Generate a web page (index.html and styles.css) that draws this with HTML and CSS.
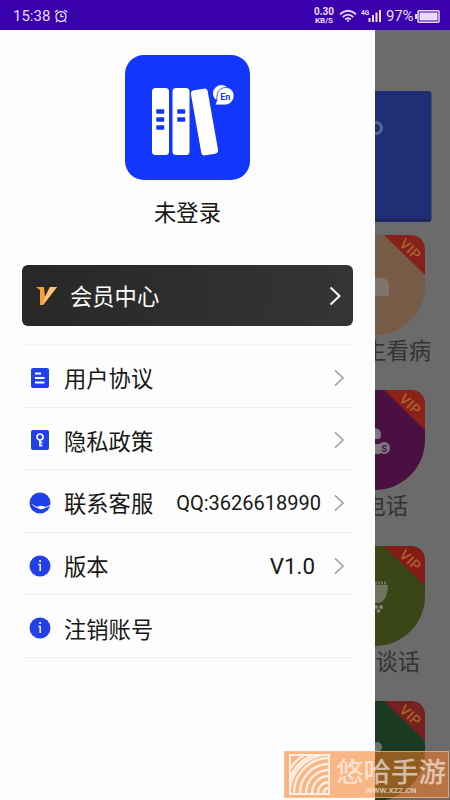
FILE: index.html
```html
<!DOCTYPE html>
<html lang="zh-CN">
<head>
<meta charset="utf-8">
<title>未登录</title>
<link rel="stylesheet" href="styles.css">
</head>
<body>
<header class="status">
  <span class="time">15:38</span>
  <svg class="alarm" width="14" height="14" viewBox="0 0 14 14" fill="none" stroke="currentColor" stroke-width="1.3"><circle cx="7" cy="7.5" r="5"/><path d="M7 4.5v3.2h2.5M1 3.2 3.6 1M13 3.2 10.4 1M3.2 11.5 2 13M10.8 11.5 12 13"/></svg>
  <span class="speed"><b>0.30</b><b>KB/S</b></span>
  <svg class="wifi" width="18" height="14" viewBox="0 0 18 14" fill="none" stroke="currentColor" stroke-width="1.8"><path d="M1 5.2Q9-1.6 17 5.2M3.7 8Q9 3.3 14.3 8M6.2 10.5Q9 8 11.8 10.5"/><circle cx="9" cy="12" r="1" fill="currentColor" stroke="none"/></svg>
  <svg class="signal" width="21" height="14" viewBox="0 0 21 14" fill="currentColor"><text x="0" y="6" class="net">4G</text><path d="M7.500 9h2v4h-2zM11 6h2v7h-2zM14.500 3.500h2V13h-2zM18 1h2v12h-2z"/></svg>
  <span class="percent">97%</span>
  <svg class="battery" width="25" height="13" viewBox="0 0 25 13"><rect x="3" y=".8" width="21" height="11.4" rx="1" fill="none" stroke="currentColor" stroke-width="1.5"/><path d="M4.500 2.500h18v8h-18zM0 4h2v5H0z" fill="currentColor"/></svg>
</header>
<main class="screen">
  <aside class="drawer">
    <svg class="logo" width="125" height="125" viewBox="0 0 125 125">
      <rect width="125" height="125" rx="19" fill="#1236fb"/>
      <g fill="#fff"><rect x="27" y="33" width="17" height="67" rx="3.5"/><rect x="47.500" y="33" width="17" height="67" rx="3.500"/><rect x="71" y="34" width="17" height="66" rx="3.500" transform="rotate(-10 79.500 67)"/><path d="M90 44A8.500 8.500 0 1 1 103 33L98 46Z"/></g>
      <path d="M90 50l2-5C91 37 95 32.500 101 32.500c5 0 8 4 8 8.500s-4 9-9 9Z" fill="#fff" stroke="#1236fb" stroke-width=".8"/>
      <path d="M32 55h6.500v3H32zM32 63h6.500v3H32zM32 71h6.500v3H32zM53 55h6.500v3H53zM53 63h6.500v3H53z" fill="#1236fb" stroke="#1236fb" stroke-width="1.500" stroke-linejoin="round"/>
      <text x="100.300" y="44.800" class="en">En</text>
    </svg>
    <div class="name">未登录</div>
    <div class="member">
      <svg width="21" height="20" viewBox="0 0 21 20"><path d="M0 1H8L9 11 14 1H21L7 19H4L4 4Z" fill="#f5a03c"/><path d="M14 1H21L7 19 9 11Z" fill="#ffc27a"/></svg>
      <span>会员中心</span>
      <svg class="arrow" width="12" height="20" viewBox="0 0 12 20"><path d="m1.500 1.500 9 8.500-9 8.500"/></svg>
    </div>
    <ul class="menu">
      <li><svg class="icon" width="22" height="22" viewBox="0 0 22 22"><rect x="2" y="1" width="18" height="20" rx="2" fill="#2140e8"/><path d="M6 6.500h6M6 11h9.500M6 15.500h9.500" stroke="#fff" stroke-width="1.800"/></svg><span>用户协议</span><svg class="arrow" width="12" height="18" viewBox="0 0 12 20"><path d="m1.500 1.500 9 8.500-9 8.500"/></svg></li>
      <li><svg class="icon" width="22" height="22" viewBox="0 0 22 22"><rect x="2" y="1" width="18" height="20" rx="2" fill="#2140e8"/><g fill="none" stroke="#fff" stroke-width="1.700"><circle cx="11" cy="8" r="3"/><path d="M11 11v6.500M11 13.500h2.500M11 16.500h2.500"/></g></svg><span>隐私政策</span><svg class="arrow" width="12" height="18" viewBox="0 0 12 20"><path d="m1.500 1.500 9 8.500-9 8.500"/></svg></li>
      <li><svg class="icon" width="22" height="22" viewBox="0 0 22 22"><circle cx="11" cy="11" r="10.500" fill="#2140e8"/><path d="M3.500 12.500Q5.500 15.500 10 15.500M15 15.500Q19 15 22 13" fill="none" stroke="#fff" stroke-width="1"/><ellipse cx="12.300" cy="15.500" rx="3.500" ry="1.700" fill="#fff"/></svg><span>联系客服</span><span class="value qq">QQ:3626618990</span><svg class="arrow" width="12" height="18" viewBox="0 0 12 20"><path d="m1.500 1.500 9 8.500-9 8.500"/></svg></li>
      <li><svg class="icon" width="22" height="22" viewBox="0 0 22 22"><circle cx="11" cy="11" r="10.500" fill="#2140e8"/><path d="M10.200 5h1.800v2h-1.800zM9.200 8.800H12V16h-1.600V10H9.200z" fill="#e8ecff"/></svg><span>版本</span><span class="value ver">V1.0</span><svg class="arrow" width="12" height="18" viewBox="0 0 12 20"><path d="m1.500 1.500 9 8.500-9 8.500"/></svg></li>
      <li><svg class="icon" width="22" height="22" viewBox="0 0 22 22"><circle cx="11" cy="11" r="10.500" fill="#2140e8"/><path d="M10.200 5h1.800v2h-1.800zM9.200 8.800H12V16h-1.600V10H9.200z" fill="#e8ecff"/></svg><span>注销账号</span></li>
    </ul>
  </aside>
  <section class="behind">
    <svg class="banner" width="57" height="131" viewBox="0 0 57 131"><rect x="-10" width="66.500" height="131" rx="3" fill="#202f75"/><path d="M0 129h55" stroke="#1b2654" stroke-width="2"/><circle cx="1" cy="37" r="5.500" fill="none" stroke="#53688c" stroke-width="3"/></svg>
    <article class="tile">
      <svg width="50" height="100" viewBox="50 0 50 100"><circle cx="50" cy="50" r="50" fill="#765b46"/><path d="M50 43h8q5 1 6 6v12H50Z" fill="#7d756e"/><path d="M59 0H84Q100 0 100 16V40Z" fill="#85201a"/><text class="vip" transform="translate(73.500 10) rotate(43)">VIP</text></svg>
      <span class="label l1">生看病</span>
    </article>
    <article class="tile">
      <svg width="50" height="100" viewBox="50 0 50 100"><path d="M50 0H84Q100 0 100 16V50A50 50 0 0 1 50 100Z" fill="#4a1042"/><path d="M50 38q7 1 6 9l-2 2h-4ZM50 54h5v10h-5Z" fill="#807680"/><circle cx="59" cy="58" r="6" fill="#807680"/><text x="56.500" y="61.500" class="coin">S</text><path d="M59 0H84Q100 0 100 16V40Z" fill="#8b2118"/><text class="vip" transform="translate(73.500 10) rotate(43)">VIP</text></svg>
      <span class="label l2">电话</span>
    </article>
    <article class="tile">
      <svg width="50" height="100" viewBox="50 0 50 100"><path d="M50 0H84Q100 0 100 16V50A50 50 0 0 1 50 100Z" fill="#3a4615"/><path d="M50 39h13q0 14-8 18h-5Z" fill="#727361"/><path d="M50 37h12" stroke="#727361" stroke-width="3" stroke-dasharray="2 1"/><circle cx="51" cy="61" r="2" fill="#85857a"/><circle cx="56" cy="61" r="2" fill="#85857a"/><circle cx="53.500" cy="65" r="1.800" fill="#85857a"/><path d="M59 0H84Q100 0 100 16V40Z" fill="#851b17"/><text class="vip" transform="translate(73.500 10) rotate(43)">VIP</text></svg>
      <span class="label l3">谈话</span>
    </article>
    <article class="tile">
      <svg width="50" height="100" viewBox="50 0 50 100"><path d="M50 0H84Q100 0 100 16V50A50 50 0 0 1 50 100Z" fill="#1a3b22"/><circle cx="52" cy="46" r="5" fill="#66756a"/><path d="M59 0H84Q100 0 100 16V40Z" fill="#78201f"/><text class="vip" transform="translate(73.500 10) rotate(43)">VIP</text></svg>
    </article>
  </section>
</main>
<div class="watermark">
  <svg width="41" height="41" viewBox="0 0 41 41" fill="none" stroke="#fff" opacity=".78"><rect x="1" y="1" width="39" height="39" stroke-width="2"/><path d="M35 39a5 5 0 0 1 5-5M29 39a11 11 0 0 1 11-11M23 39A17 17 0 0 1 40 22M17 39A23 23 0 0 1 40 16M11 39A29 29 0 0 1 40 10M5 39A35 35 0 0 1 40 4M1 33A39 39 0 0 1 34 1M1 24A41 41 0 0 1 24 1M1 15A40 40 0 0 1 15 1" stroke-width="2.400"/></svg>
  <div class="brand"><strong>悠哈手游</strong><small>WWW.XZZ.CN</small></div>
</div>
</body>
</html>
```

FILE: styles.css
```css
* { box-sizing: border-box; }
body {
  margin: 0;
  width: 450px;
  height: 800px;
  overflow: hidden;
  position: relative;
  background: #fdfdfd;
  color: #171717;
  font-family: Roboto, "Noto Sans CJK SC", sans-serif;
}
svg { display: block; flex: none; }
.status {
  height: 30px;
  background: #3a00ad;
  color: #eadcff;
  display: flex;
  align-items: center;
  padding: 2px 10px 0 13px;
}
.time { font-size: 15px; width: 41px; }
.speed {
  margin-left: auto;
  display: flex;
  flex-direction: column;
  align-items: center;
  width: 22px;
}
.speed b:first-child { font-size: 10px; line-height: 10px; }
.speed b:last-child { font-size: 8px; line-height: 8px; }
.wifi { margin-left: 4px; }
.signal { margin-left: 4px; }
.net { font-size: 6.500px; font-weight: 700; }
.percent { font-size: 15px; margin-left: 4px; width: 28px; letter-spacing: -.2px; }
.battery { margin-left: 1px; }
.screen { display: flex; height: 770px; }
.drawer {
  width: 375px;
  flex: none;
  background: #fdfdfd;
  padding: 25px 22px 0;
  display: flex;
  flex-direction: column;
}
.logo { align-self: center; }
.en { font: 700 9px Roboto, sans-serif; fill: #1236fb; text-anchor: middle; }
.name { margin-top: 17px; text-align: center; font-size: 22.300px; line-height: 32px; }
.member {
  margin-top: 36px;
  width: 331px;
  height: 61px;
  border-radius: 6px;
  background: linear-gradient(100deg, #272727, #353535);
  color: #fff;
  display: flex;
  align-items: center;
  padding: 0 12px 0 14px;
  font-size: 22.300px;
}
.member span { margin: -2px 0 0 13px; }
.arrow { margin-left: auto; fill: none; stroke: #a3a3a3; stroke-width: 1.800; }
.member .arrow { stroke: #fff; stroke-width: 2; }
.menu { list-style: none; margin: 18px 0 0; padding: 0; border-top: 1px solid #f5f5f5; }
.menu li {
  height: 62.600px;
  border-bottom: 1.500px solid #f0f0f0;
  display: flex;
  align-items: center;
  padding: 4px 8px 0 7px;
  font-size: 22.300px;
}
.menu span { margin-top: -1px; }
.icon { margin-right: 13px; }
.menu .value { margin: 1px 0 0 auto; }
.value + .arrow { margin-left: 12px; }
.qq { font-size: 20px; }
.menu .ver { margin-right: 6px; }
.behind {
  width: 75px;
  background: #6b6b6b;
  padding-top: 61px;
  overflow: hidden;
}
.banner { margin-bottom: 13px; }
.tile { height: 155.300px; overflow: hidden; }
.vip { font: 500 14px Roboto, sans-serif; fill: #a86428; letter-spacing: .5px; }
.coin { font: 700 9px Roboto, sans-serif; fill: #4a1042; }
.label {
  display: flex;
  justify-content: flex-end;
  white-space: nowrap;
  font-size: 22.300px;
  line-height: 32px;
  color: #333;
}
.l1 { width: 56px; }
.l2 { width: 33px; }
.l3 { width: 45px; }
.watermark {
  position: absolute;
  left: 284px;
  top: 751px;
  width: 165px;
  height: 47px;
  padding: 2px 0 0 4px;
  border: 1px solid rgba(250, 200, 160, .6);
  background: rgba(245, 122, 32, .55);
  display: flex;
}
.brand { margin-left: 6px; color: rgba(255, 255, 255, .6); text-align: center; }
.brand strong {
  display: block;
  font: 500 27.500px/32px "Noto Sans CJK SC", sans-serif;
  white-space: nowrap;
}
.brand small { display: block; font-size: 8px; line-height: 9px; font-weight: 700; }
```
